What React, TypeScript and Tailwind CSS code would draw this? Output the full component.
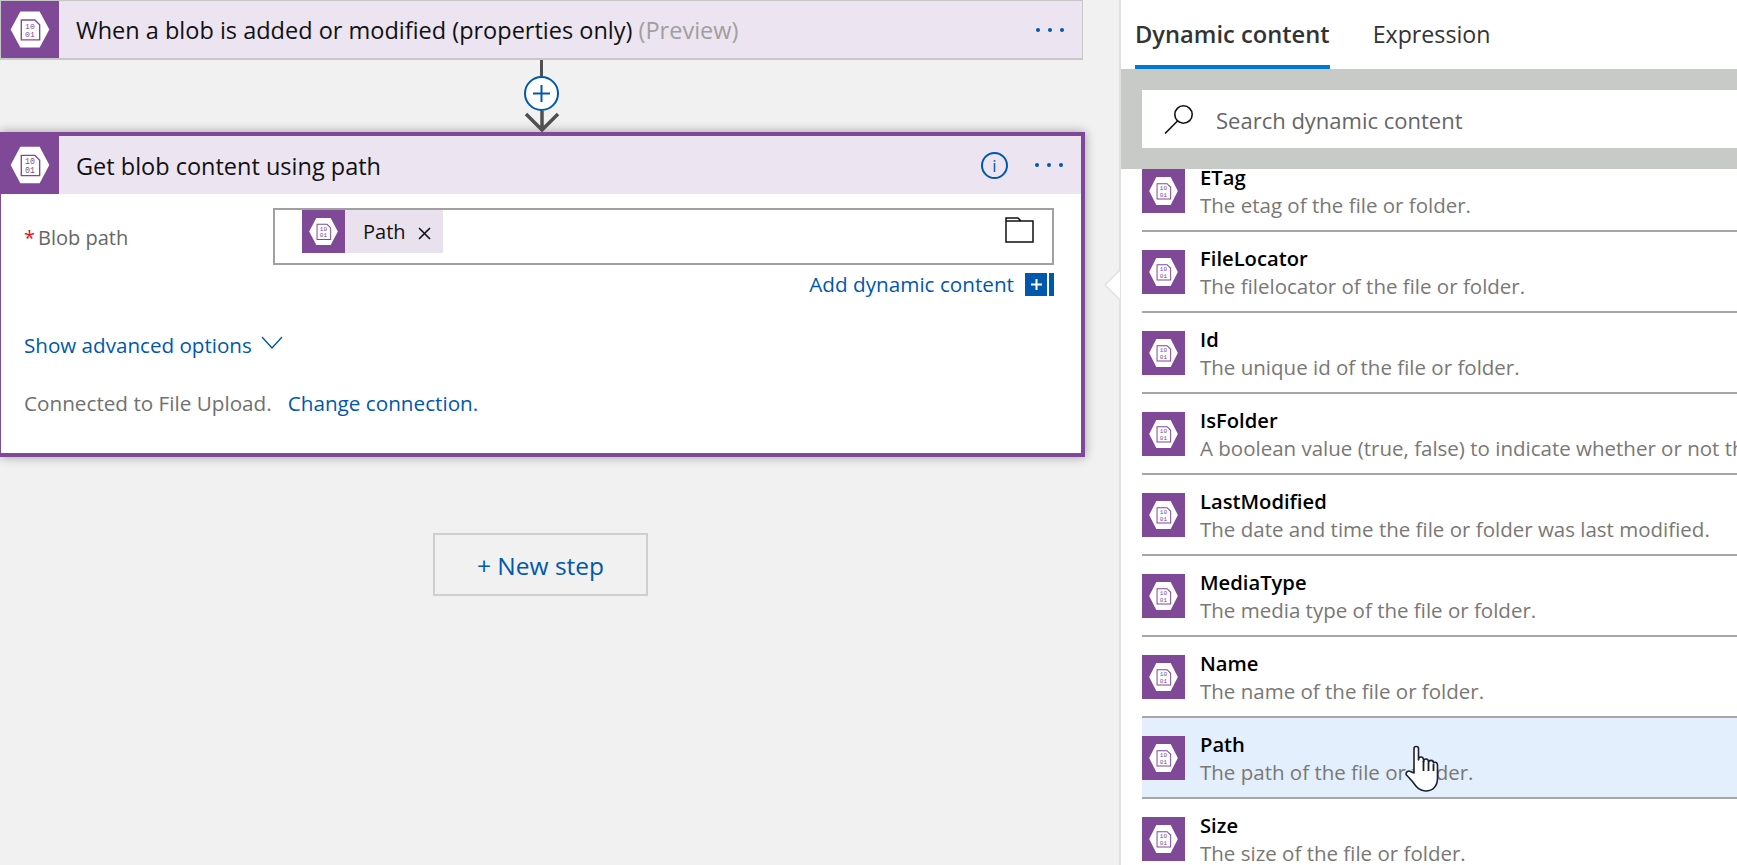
const fields = [
  { name: "ETag", desc: "The etag of the file or folder." },
  { name: "FileLocator", desc: "The filelocator of the file or folder." },
  { name: "Id", desc: "The unique id of the file or folder." },
  { name: "IsFolder", desc: "A boolean value (true, false) to indicate whether or not the blob is a folder." },
  { name: "LastModified", desc: "The date and time the file or folder was last modified." },
  { name: "MediaType", desc: "The media type of the file or folder." },
  { name: "Name", desc: "The name of the file or folder." },
  { name: "Path", desc: "The path of the file or folder.", hover: true },
  { name: "Size", desc: "The size of the file or folder." },
];

function BlobIcon({ className }: { className: string }) {
  return (
    <svg viewBox="0 0 60 60" preserveAspectRatio="none" className={className}>
      <rect width="60" height="60" fill="#804998" />
      <polygon points="10,30 20,11 40,11 50,30 40,49 20,49" fill="#fff" />
      <path d="M21 20H35L40 25V41H21Z" fill="none" stroke="#804998" strokeWidth="1.4" />
      <text x="30" y="29" textAnchor="middle" fontSize="8.5" fontFamily="'Liberation Mono', monospace" fill="#804998">10</text>
      <text x="30" y="38" textAnchor="middle" fontSize="8.5" fontFamily="'Liberation Mono', monospace" fill="#804998">01</text>
    </svg>
  );
}

function Dots() {
  return (
    <div className="flex gap-2">
      <span className="h-1 w-1 rounded-full bg-[#0058ad]" />
      <span className="h-1 w-1 rounded-full bg-[#0058ad]" />
      <span className="h-1 w-1 rounded-full bg-[#0058ad]" />
    </div>
  );
}

function Connector() {
  return (
    <div className="flex h-[72px] w-[1083px] flex-col items-center">
      <div className="h-4 w-[3px] bg-[#505050]" />
      <div className="flex h-[35px] w-[35px] items-center justify-center rounded-full border-2 border-[#0058ad] bg-white">
        <svg width="17" height="17" viewBox="0 0 17 17" stroke="#0058ad" strokeWidth="2">
          <path d="M8.5 0V17M0 8.5H17" />
        </svg>
      </div>
      <svg width="36" height="21" viewBox="0 0 36 21" fill="none" stroke="#505050" strokeWidth="3.5">
        <path d="M18 0V19M2 3L18 19L34 3" />
      </svg>
    </div>
  );
}

function BlobCard() {
  return (
    <div className="flex h-[325px] w-[1085px] flex-col border-y-4 border-r-4 border-l border-[#804998] bg-white shadow-[0_0_10px_rgba(0,0,0,0.35)]">
      <div className="flex h-[58px] items-center bg-[#ece4f0] pr-[18px]">
        <BlobIcon className="h-[58px] w-[58px]" />
        <div className="ml-[17px] flex-1 pt-1 text-[23.5px] text-[#111]">Get blob content using path</div>
        <div className="mr-[27px] flex h-[27px] w-[27px] items-center justify-center rounded-full border-2 border-[#0058ad] text-[17px] leading-none text-[#0058ad]">
          i
        </div>
        <Dots />
      </div>

      <div className="flex items-start pt-[14px] pl-[23px]">
        <div className="mt-[15px] flex w-[249px] items-center text-[20px] text-[#666]">
          <span className="mr-[3px] text-[#e81123]">*</span>Blob path
        </div>
        <div className="flex h-[57px] w-[781px] items-start justify-between border-2 border-[#a0a0a0] pl-[27px] pr-[18px]">
          <div className="flex h-[43px] w-[141px] items-center bg-[#e9e1ee]">
            <BlobIcon className="h-[43px] w-[43px]" />
            <span className="ml-[18px] text-[20px] text-[#111]">Path</span>
            <svg width="13" height="13" viewBox="0 0 13 13" className="ml-[12px] mt-1" stroke="#111" strokeWidth="1.6">
              <path d="M1 1L12 12M12 1L1 12" />
            </svg>
          </div>
          <svg width="29" height="26" viewBox="0 0 29 26" fill="none" stroke="#111" strokeWidth="1.5" className="mt-[7px]">
            <path d="M1 1H13L16 4H28V25H1ZM1 4H16" />
          </svg>
        </div>
      </div>

      <div className="flex items-center justify-end pt-1 pr-[27px]">
        <span className="mr-[11px] text-[20.7px] text-[#0058ad]">Add dynamic content</span>
        <div className="flex h-[23px] w-[22px] items-center justify-center bg-[#0058ad]">
          <svg width="11" height="11" viewBox="0 0 11 11" stroke="#fff" strokeWidth="2">
            <path d="M5.5 0V11M0 5.5H11" />
          </svg>
        </div>
        <div className="ml-[2px] h-[23px] w-[5px] bg-[#0058ad]" />
      </div>

      <div className="mt-[31px] flex items-center pl-[23px] text-[20.6px] leading-7 text-[#0058ad]">
        Show advanced options
        <svg width="22" height="13" viewBox="0 0 22 13" fill="none" stroke="#0058ad" strokeWidth="1.4" className="ml-[9px] -mt-[5px]">
          <path d="M1 1L11 12L21 1" />
        </svg>
      </div>

      <div className="mt-[30px] pl-[23px] text-[20.7px] leading-7">
        <span className="text-[#707070]">Connected to File Upload.</span>
        <span className="ml-[16px] text-[#0058ad]">Change connection.</span>
      </div>
    </div>
  );
}

function HandCursor() {
  return (
    <svg width="34" height="47" viewBox="0 0 34 47" className="absolute left-[284px] top-[745px]" fill="#fff" stroke="#1b1f33" strokeWidth="1.6" strokeLinejoin="round">
      <path d="M9 28V3.5C9 .8 13.5 .8 13.5 3.5V15C13.5 11 18.5 11 18.5 15V17C18.5 13 23.5 13 23.5 17V18C23.5 14.5 28.5 14.5 28.5 18C30 16.5 32.5 17.5 32.5 20V33C32.5 41 28 46 20.5 46C13 46 10.5 40 7 36L1.5 30C0 28 3 25 5.5 26.5Z" />
      <path d="M18.5 16V26M23.5 18V26M28.5 19V26" strokeWidth="1.8" fill="none" />
    </svg>
  );
}

export default function App() {
  return (
    <div className="flex h-[865px] w-[1737px] overflow-hidden bg-[#f1f1f1] font-['Open_Sans',sans-serif]">
      <div className="w-[1119px] shrink-0">
        <div className="flex h-[60px] w-[1083px] items-center border-x border-t border-b-2 border-[#c8c8c8] bg-[#ece4f0] pr-[18px]">
          <BlobIcon className="h-[57px] w-[58px]" />
          <div className="ml-[17px] flex-1 pt-[2px] text-[23.5px] text-[#111]">
            When a blob is added or modified (properties only) <span className="text-[#a19f9d]">(Preview)</span>
          </div>
          <Dots />
        </div>
        <Connector />
        <BlobCard />
        <div className="mt-[76px] ml-[433px] flex h-[63px] w-[215px] items-center justify-center border-2 border-[#cfcfcf] pt-1 text-[24.5px] text-[#0058ad]">
          + New step
        </div>
      </div>

      <div className="relative w-[618px] border-l-2 border-[#e0e0e0] bg-white">
        <svg width="18" height="32" viewBox="0 0 18 32" className="absolute -left-[18px] top-[269px]" fill="#fff" stroke="#e0e0e0" strokeWidth="1.5">
          <path d="M17 1L2 16L17 31" />
        </svg>

        <div className="flex h-[69px] gap-[43px] pl-[14px]">
          <div className="flex h-full items-center border-b-4 border-[#0078d7] pt-1 text-[23.7px] font-semibold text-[#333]">Dynamic content</div>
          <div className="flex h-full items-center border-b-4 border-transparent pt-1 text-[23.2px] text-[#333]">Expression</div>
        </div>

        <div className="bg-[#c8cac7] py-[21px] pl-[21px]">
          <div className="flex h-[58px] items-center bg-white pl-[22px]">
            <svg width="29" height="29" viewBox="0 0 29 29" fill="none" stroke="#111" strokeWidth="1.6">
              <circle cx="19.5" cy="9.5" r="8.7" />
              <path d="M13.5 16L1 28.5" />
            </svg>
            <span className="ml-[23px] pt-[3px] text-[22px] text-[#666]">Search dynamic content</span>
          </div>
        </div>

        <div className="h-[696px] overflow-hidden pl-[21px]">
          <div className="-mt-[18px]">
            {fields.map((field) => (
              <div
                key={field.name}
                className={`relative flex h-[81px] border-b-2 border-[#a8a6a5] ${field.hover ? "bg-[#e3effd]" : ""}`}
              >
                <BlobIcon className="mt-[18px] h-[44px] w-[43px] shrink-0" />
                <div className="ml-[15px] whitespace-nowrap pt-[11px]">
                  <div className="text-[20.2px] font-semibold leading-[30px] text-black">{field.name}</div>
                  <div className="text-[20.5px] leading-[26px] text-[#7a7775]">{field.desc}</div>
                </div>
              </div>
            ))}
          </div>
        </div>

        <HandCursor />
      </div>
    </div>
  );
}
